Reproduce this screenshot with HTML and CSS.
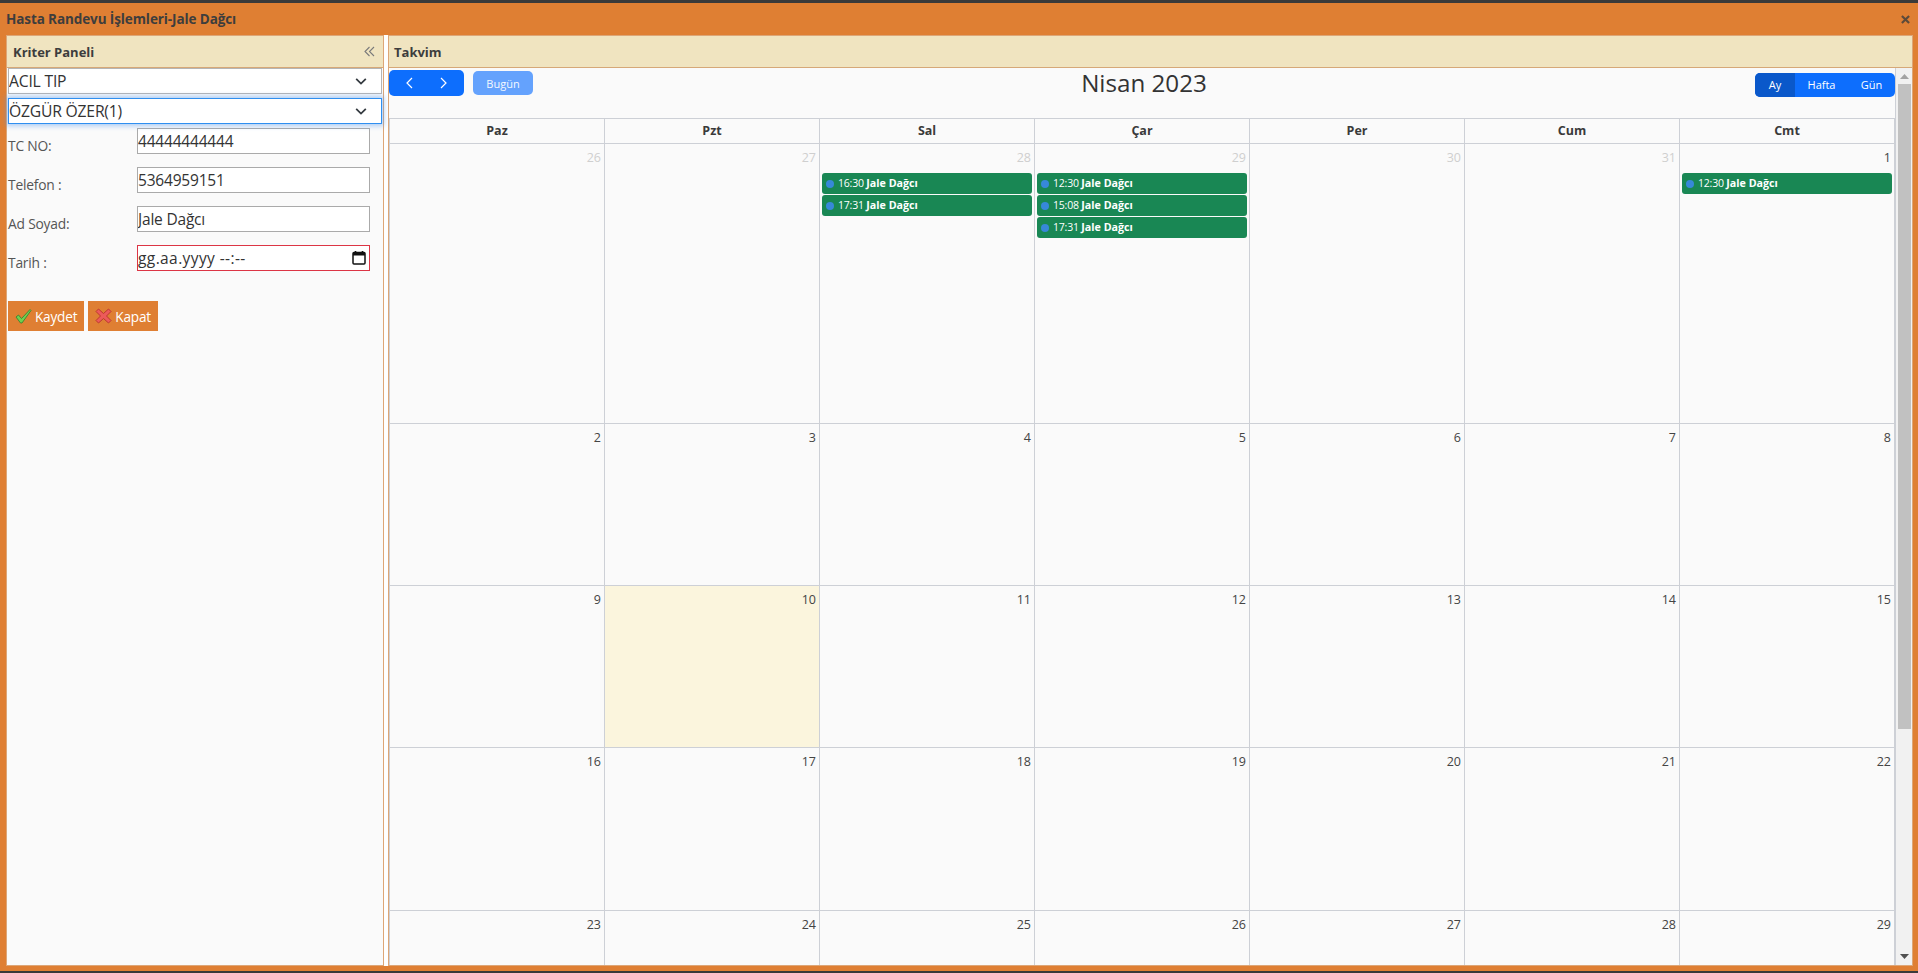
FILE: index.html
```html
<!DOCTYPE html>
<html lang="tr">
<head>
<meta charset="utf-8">
<title>Hasta Randevu İşlemleri</title>
<link rel="stylesheet" href="styles.css">
</head>
<body>
<div class="win">
  <header class="titlebar">
    <span class="title">Hasta Randevu İşlemleri-Jale Dağcı</span>
    <svg class="close" width="9" height="9" viewBox="0 0 10 10"><path d="M1 1l8 8M9 1l-8 8" stroke="#5c4a3a" stroke-width="2.400" fill="none"/></svg>
  </header>
  <div class="panes">
    <aside class="pane left">
      <div class="pane-head">
        <span>Kriter Paneli</span>
        <svg width="11" height="11" viewBox="0 0 11 11"><path d="M5.500 1L1 5.500 5.500 10M10 1L5.500 5.500 10 10" stroke="#7a7a7a" stroke-width="1.100" fill="none"/></svg>
      </div>
      <div class="pick"><select class="sel"><option>ACIL TIP</option></select><svg class="chev" width="14" height="14" viewBox="0 0 16 16"><path d="M2.500 5.500L8 11l5.500-5.500" stroke="#343a40" stroke-width="2" fill="none"/></svg></div>
      <div class="pick focus"><select class="sel"><option>ÖZGÜR ÖZER(1)</option></select><svg class="chev" width="14" height="14" viewBox="0 0 16 16"><path d="M2.500 5.500L8 11l5.500-5.500" stroke="#343a40" stroke-width="2" fill="none"/></svg></div>
      <form class="form">
        <div class="row"><label class="lbl">TC NO:</label><input class="inp" value="44444444444"></div>
        <div class="row"><label class="lbl">Telefon :</label><input class="inp" value="5364959151"></div>
        <div class="row"><label class="lbl">Ad Soyad:</label><input class="inp" value="Jale Dağcı"></div>
        <div class="row"><label class="lbl">Tarih :</label>
          <div class="date"><input class="inp bad" value="gg.aa.yyyy --:--">
            <svg class="cal" width="14" height="15" viewBox="0 0 14 15"><path d="M3.500 1v2M10.500 1v2" stroke="#111" stroke-width="1.600"/><rect x="1" y="2.500" width="12" height="11.500" rx="1" fill="none" stroke="#111" stroke-width="1.500"/><rect x="1" y="3" width="12" height="2.500" fill="#111"/></svg>
          </div>
        </div>
      </form>
      <div class="actions">
        <button class="btn" type="button"><svg width="17" height="16" viewBox="0 0 17 16"><path d="M1 9l2.500-2 3 3.500L15 1.500l1 1L7 15h-1.500z" fill="#6fcf4f" stroke="#2f7d2f" stroke-width=".8"/></svg>Kaydet</button>
        <button class="btn" type="button"><svg width="17" height="16" viewBox="0 0 17 16"><path d="M3.500 1L8.500 5.500 13.500 1 16 3.500 11.500 8 16 12.500 13.500 15 8.500 10.500 3.500 15 1 12.500 5.500 8 1 3.500z" fill="#ec5a5a" stroke="#b02a2a" stroke-width=".8"/></svg>Kapat</button>
      </div>
    </aside>
    <div class="split"></div>
    <section class="pane right">
      <div class="pane-head"><span>Takvim</span></div>
      <div class="scroller">
        <div class="main">
          <div class="toolbar">
            <div class="tb-left">
              <div class="nav">
                <svg width="12" height="14" viewBox="0 0 12 14"><path d="M8 2L3 7l5 5" stroke="#fff" stroke-width="1.200" fill="none"/></svg>
                <svg width="12" height="14" viewBox="0 0 12 14"><path d="M4 2l5 5-5 5" stroke="#fff" stroke-width="1.200" fill="none"/></svg>
              </div>
              <button class="today" type="button">Bugün</button>
            </div>
            <h2 class="month">Nisan 2023</h2>
            <div class="views"><span class="view on">Ay</span><span class="view">Hafta</span><span class="view">Gün</span></div>
          </div>
          <div class="grid">
            <div class="dow">Paz</div><div class="dow">Pzt</div><div class="dow">Sal</div><div class="dow">Çar</div><div class="dow">Per</div><div class="dow">Cum</div><div class="dow">Cmt</div>

            <div class="day off"><span class="num">26</span></div>
            <div class="day off"><span class="num">27</span></div>
            <div class="day off"><span class="num">28</span>
              <div class="ev"><i class="dot"></i>16:30 <b>Jale Dağcı</b></div>
              <div class="ev"><i class="dot"></i>17:31 <b>Jale Dağcı</b></div>
            </div>
            <div class="day off"><span class="num">29</span>
              <div class="ev"><i class="dot"></i>12:30 <b>Jale Dağcı</b></div>
              <div class="ev"><i class="dot"></i>15:08 <b>Jale Dağcı</b></div>
              <div class="ev"><i class="dot"></i>17:31 <b>Jale Dağcı</b></div>
            </div>
            <div class="day off"><span class="num">30</span></div>
            <div class="day off"><span class="num">31</span></div>
            <div class="day"><span class="num">1</span>
              <div class="ev"><i class="dot"></i>12:30 <b>Jale Dağcı</b></div>
            </div>

            <div class="day"><span class="num">2</span></div><div class="day"><span class="num">3</span></div><div class="day"><span class="num">4</span></div><div class="day"><span class="num">5</span></div><div class="day"><span class="num">6</span></div><div class="day"><span class="num">7</span></div><div class="day"><span class="num">8</span></div>

            <div class="day"><span class="num">9</span></div><div class="day now"><span class="num">10</span></div><div class="day"><span class="num">11</span></div><div class="day"><span class="num">12</span></div><div class="day"><span class="num">13</span></div><div class="day"><span class="num">14</span></div><div class="day"><span class="num">15</span></div>

            <div class="day"><span class="num">16</span></div><div class="day"><span class="num">17</span></div><div class="day"><span class="num">18</span></div><div class="day"><span class="num">19</span></div><div class="day"><span class="num">20</span></div><div class="day"><span class="num">21</span></div><div class="day"><span class="num">22</span></div>

            <div class="day"><span class="num">23</span></div><div class="day"><span class="num">24</span></div><div class="day"><span class="num">25</span></div><div class="day"><span class="num">26</span></div><div class="day"><span class="num">27</span></div><div class="day"><span class="num">28</span></div><div class="day"><span class="num">29</span></div>
          </div>
        </div>
        <div class="sbar">
          <svg width="9" height="5" viewBox="0 0 9 5"><path d="M4.500 0L9 5H0z" fill="#a3a3a3"/></svg>
          <div class="thumb"></div>
          <svg width="9" height="5" viewBox="0 0 9 5"><path d="M0 0h9L4.500 5z" fill="#505050"/></svg>
        </div>
      </div>
    </section>
  </div>
</div>
</body>
</html>
```

FILE: styles.css
```css
* { box-sizing: border-box; }
html, body { margin: 0; height: 100%; overflow: hidden; }
body { font-family: "Open Sans", "Noto Sans", sans-serif; color: #333; }

.win {
  height: 973px;
  background: #df7f33;
  border-top: 3px solid #3a3a3a;
  border-bottom: 2px solid #3a3a3a;
  padding: 0 5px 5px 6px;
  display: flex;
  flex-direction: column;
}
.titlebar {
  height: 32px;
  flex: none;
  display: flex;
  align-items: center;
  justify-content: space-between;
}
.title { font-size: 13.500px; font-weight: 700; color: #3d3d3d; letter-spacing: -.1px; }
.close { margin-right: 3px; }

.panes { flex: 1; display: flex; min-height: 0; }
.pane { border: 1px solid #dda677; background: #fafafa; display: flex; flex-direction: column; min-height: 0; }
.left { width: 378px; flex: none; }
.split { width: 4px; flex: none; background: #fff; }
.right { flex: 1; min-width: 0; }

.pane-head {
  height: 32px;
  flex: none;
  background: #f0e4c0;
  border-bottom: 1px solid #d6a878;
  display: flex;
  align-items: center;
  justify-content: space-between;
  font-size: 13px;
  font-weight: 700;
  color: #3d3d3d;
  padding: 0 8px 0 5px;
}
.left .pane-head { padding-left: 6px; }

.pick { position: relative; height: 26px; margin: 0 1px; }
.pick + .pick { margin-top: 4px; }
.pick .chev { position: absolute; right: 14px; top: 6px; pointer-events: none; }
.sel {
  appearance: none;
  width: 100%;
  height: 100%;
  background: #fff;
  border: 1px solid #b5b5b5;
  border-radius: 0;
  padding: 0;
  font: 15.700px "Open Sans", sans-serif;
  letter-spacing: -.2px;
  color: #333;
  outline: none;
}
.focus .sel { border-color: #2f8ff0; box-shadow: 0 0 5px 2px rgba(80,150,240,.45); }

.form { padding: 4px 0 0 1px; display: flex; flex-direction: column; gap: 13px; }
.row { display: flex; width: 362px; height: 26px; }
.lbl { width: 129px; flex: none; font-size: 13.800px; line-height: 20px; color: #555; padding-top: 8px; letter-spacing: -.2px; }
.inp {
  display: block;
  width: 100%;
  height: 26px;
  background: #fff;
  border: 1px solid #aaa;
  border-radius: 0;
  padding: 0;
  font: 15.500px "Open Sans", sans-serif;
  letter-spacing: -.2px;
  color: #333;
  outline: none;
}
.date { position: relative; width: 100%; }
.bad { border-color: #dc3545; letter-spacing: .4px; }
.cal { position: absolute; right: 4px; top: 5px; }

.actions { display: flex; gap: 4px; margin: 30px 0 0 1px; }
.btn {
  height: 30px;
  background: #df7f33;
  border: 0;
  color: #fff;
  font: 13.600px "Open Sans", sans-serif;
  letter-spacing: -.2px;
  display: flex;
  align-items: center;
  gap: 3px;
  padding: 0 7px;
}

.scroller { flex: 1; display: flex; min-height: 0; }
.main { flex: 1; min-width: 0; }
.toolbar {
  height: 50px;
  position: relative;
  display: flex;
  justify-content: space-between;
  padding-top: 2px;
}
.tb-left { display: flex; gap: 9px; align-items: flex-start; }
.nav {
  width: 75px;
  height: 26px;
  background: #0d6efd;
  border-radius: 5px;
  display: flex;
  align-items: center;
  justify-content: space-around;
  padding: 0 5px;
}
.today {
  margin-top: 1px;
  width: 60px;
  height: 24px;
  border: 0;
  border-radius: 5px;
  background: #64a2fd;
  color: #f4f8ff;
  font: 11px "Open Sans", sans-serif;
  padding: 0;
}
.month {
  margin: 0;
  position: absolute;
  left: 0;
  right: 0;
  top: -2px;
  text-align: center;
  font-size: 24.200px;
  font-weight: 500;
  line-height: 34px;
  padding-left: 4px;
  color: #333;
  pointer-events: none;
}
.views {
  margin-top: 3px;
  width: 140px;
  height: 24px;
  border-radius: 5px;
  overflow: hidden;
  background: #0d6efd;
  display: grid;
  grid-template-columns: 40px 53px 47px;
  font-size: 11px;
  line-height: 24px;
  color: #fff;
  text-align: center;
}
.view.on { background: #0a58ca; }

.grid {
  width: 1506px;
  height: 847px;
  overflow: hidden;
  display: grid;
  grid-template-columns: repeat(7, 215px);
  grid-template-rows: 25px 280px 162px 162px 163px 60px;
  border-left: 1px solid #cdd0d6;
  border-top: 1px solid #cdd0d6;
}
.dow {
  border-right: 1px solid #cdd0d6;
  border-bottom: 1px solid #cdd0d6;
  text-align: center;
  font-size: 12.500px;
  font-weight: 700;
  line-height: 24px;
  color: #3a3a3a;
}
.day {
  border-right: 1px solid #cdd0d6;
  border-bottom: 1px solid #cdd0d6;
  padding: 5px 2px 0;
  display: flex;
  flex-direction: column;
  gap: 1px;
}
.num { align-self: flex-end; padding-right: 1px; height: 23px; font-size: 12.500px; line-height: 18px; color: #444; }
.off .num { color: #cfcfcf; }
.now { background: #fbf5dd; }
.ev {
  height: 21px;
  background: #198754;
  border-radius: 3px;
  color: #fff;
  font-size: 10.500px;
  line-height: 20px;
  letter-spacing: -.2px;
  padding: 0 0 2px 4px;
  display: flex;
  align-items: center;
  white-space: pre;
}
.ev b { letter-spacing: 0; font-size: 10.700px; }
.dot { width: 8px; height: 8px; border-radius: 50%; background: #3788d8; margin-right: 4px; flex: none; position: relative; top: 1px; }

.sbar {
  width: 17px;
  flex: none;
  background: #f1f1f1;
  border-left: 1px solid #cdd0d6;
  display: flex;
  flex-direction: column;
  align-items: center;
  justify-content: space-between;
  padding: 6px 0;
}
.thumb { width: 13px; height: 645px; background: #c1c1c1; margin: 5px 0 auto; }
```
